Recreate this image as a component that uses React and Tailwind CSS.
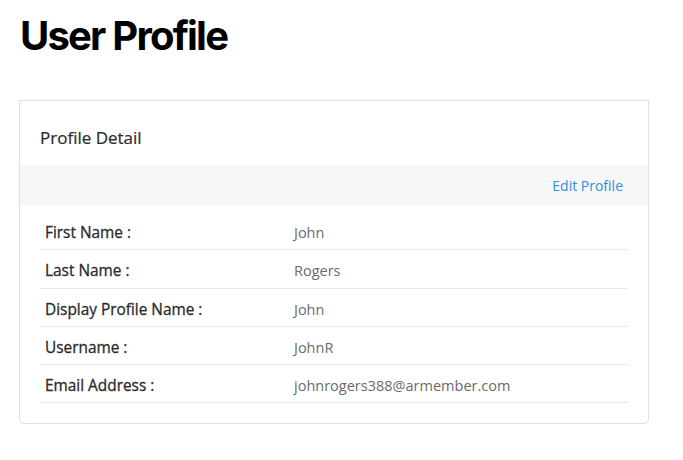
import React from 'react';

const rows = [
  { label: 'First Name :', value: 'John' },
  { label: 'Last Name :', value: 'Rogers' },
  { label: 'Display Profile Name :', value: 'John' },
  { label: 'Username :', value: 'JohnR' },
  { label: 'Email Address :', value: 'johnrogers388@armember.com' },
];

const App = () => {
  return (
    <div className="bg-white min-h-screen pt-[12px] pl-[19px] pr-[35px]" style={{ fontFamily: '"Open Sans", sans-serif' }}>
      <h1 className="text-[40px] leading-[48px] font-bold tracking-[-0.045em] text-black pl-[1px]" style={{ fontFamily: 'Inter, sans-serif' }}>
        User Profile
      </h1>

      <div className="mt-[40px] w-[630px] border border-[#dfe1e8] rounded-b-[5px] bg-white">
        <div className="px-[20px] pt-[25px] pb-[15px]">
          <h2 className="text-[17px] leading-[24px] text-[#2b2b2b] [-webkit-text-stroke:0.2px_#2b2b2b]">Profile Detail</h2>
        </div>

        <div className="bg-[#f7f7f7] h-[41px] flex items-center justify-end pr-[25px]">
          <a href="#" className="text-[14px] text-[#2f8fdf]">Edit Profile</a>
        </div>

        <div className="px-[20px] pt-[6px] pb-[20px]">
          {rows.map((row) => (
            <div key={row.label} className="flex items-baseline border-b border-[#e8e8ec] pl-[5px] pt-[10px] pb-[5.25px]">
              <div className="w-[249px] text-[15.4px] leading-[22px] text-[#2b2b2b] [-webkit-text-stroke:0.3px_#2b2b2b]">{row.label}</div>
              <div className="flex-1 text-[14.5px] leading-[22px] text-[#6b6b6b]">{row.value}</div>
            </div>
          ))}
        </div>
      </div>
    </div>
  );
};

export default App;
